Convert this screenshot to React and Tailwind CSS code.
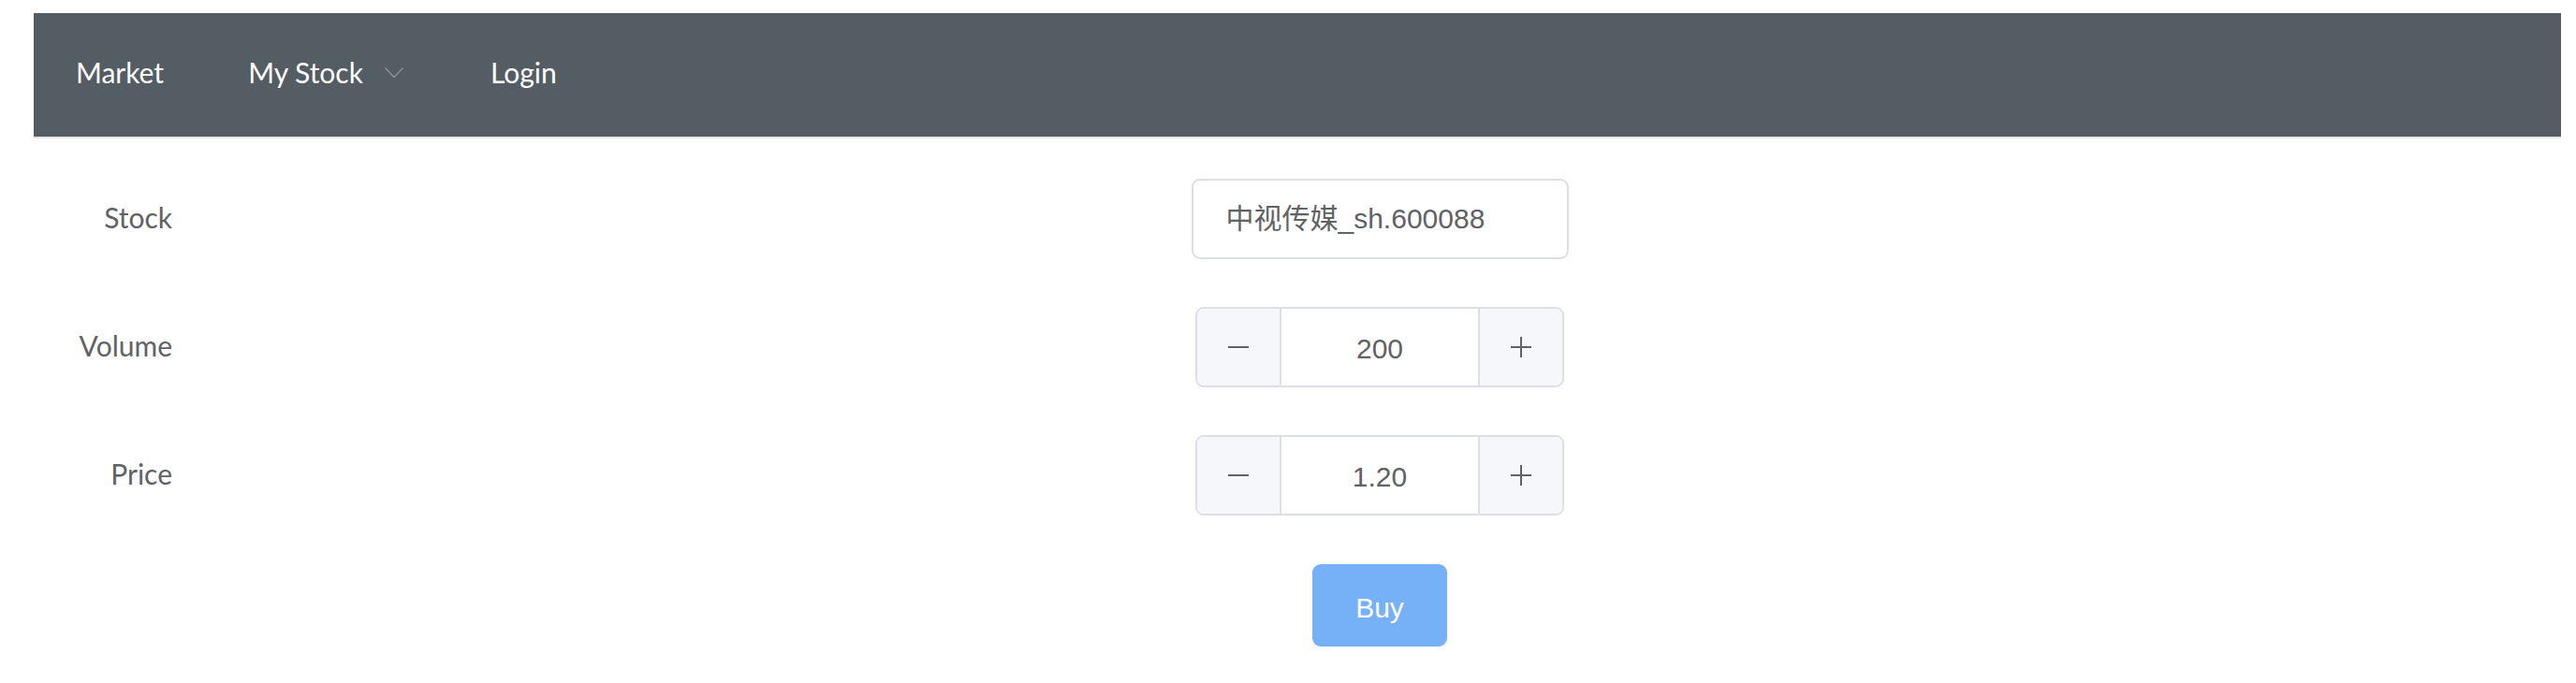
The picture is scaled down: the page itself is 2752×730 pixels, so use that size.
import React from "react";

function Stepper({ value }) {
  return (
    <div className="flex w-[394px] h-[86px] rounded-[9px] border-2 border-[#dcdfe6] overflow-hidden bg-white">
      <div className="w-[90px] h-full bg-[#f5f7fa] border-r-2 border-[#dcdfe6] flex items-center justify-center">
        <svg width="24" height="24" viewBox="0 0 24 24">
          <line x1="1" y1="12" x2="23" y2="12" stroke="#606266" strokeWidth="2" />
        </svg>
      </div>
      <div className="flex-1 flex items-center justify-center pt-[2px] text-[30px] text-[#606266] font-['Liberation_Sans','Noto_Sans_CJK_SC',sans-serif]">
        {value}
      </div>
      <div className="w-[90px] h-full bg-[#f5f7fa] border-l-2 border-[#dcdfe6] flex items-center justify-center">
        <svg width="24" height="24" viewBox="0 0 24 24">
          <line x1="1" y1="12" x2="23" y2="12" stroke="#606266" strokeWidth="2" />
          <line x1="12" y1="1" x2="12" y2="23" stroke="#606266" strokeWidth="2" />
        </svg>
      </div>
    </div>
  );
}

function Row({ label, children }) {
  return (
    <div className="flex items-center h-[86px]">
      <div className="w-[176px] pr-[28px] pb-[4px] text-right text-[30px] text-[#606266] font-normal font-['Lato',sans-serif]">
        {label}
      </div>
      <div className="flex-1 flex justify-center">{children}</div>
    </div>
  );
}

export default function App() {
  return (
    <div className="pl-[36px] pr-[16px] pt-[14px] bg-white min-h-[730px]">
      <nav className="h-[134px] bg-[#545c64] border-b-2 border-[#e6e6e6] flex items-stretch text-white text-[30px] font-normal font-['Lato',sans-serif]">
        <div className="px-[45px] pb-[6px] flex items-center">Market</div>
        <div className="px-[45px] pb-[6px] flex items-center">
          <span>My Stock</span>
          <svg className="ml-[22px] mt-[2px]" width="22" height="14" viewBox="0 0 22 14">
            <polyline points="1.5,1.5 11,11.5 20.5,1.5" fill="none" stroke="#909399" strokeWidth="1.3" />
          </svg>
        </div>
        <div className="pl-[47px] pr-[45px] pb-[6px] flex items-center">Login</div>
      </nav>

      <div className="mt-[43px] flex flex-col gap-[51px]">
        <Row label="Stock">
          <div className="w-[403px] h-[86px] rounded-[9px] border-2 border-[#dcdfe6] flex items-center pl-[35px] pb-[2px] text-[30px] text-[#606266] font-['Liberation_Sans','Noto_Sans_CJK_SC',sans-serif]">
            中视传媒_sh.600088
          </div>
        </Row>
        <Row label="Volume">
          <Stepper value="200" />
        </Row>
        <Row label="Price">
          <Stepper value="1.20" />
        </Row>
        <div className="flex">
          <div className="w-[176px]" />
          <div className="flex-1 flex justify-center">
            <button className="w-[144px] h-[88px] mt-[1px] pt-[4px] rounded-[9px] bg-[#76b0f7] text-white text-[30px] font-['Liberation_Sans',sans-serif]">
              Buy
            </button>
          </div>
        </div>
      </div>
    </div>
  );
}
